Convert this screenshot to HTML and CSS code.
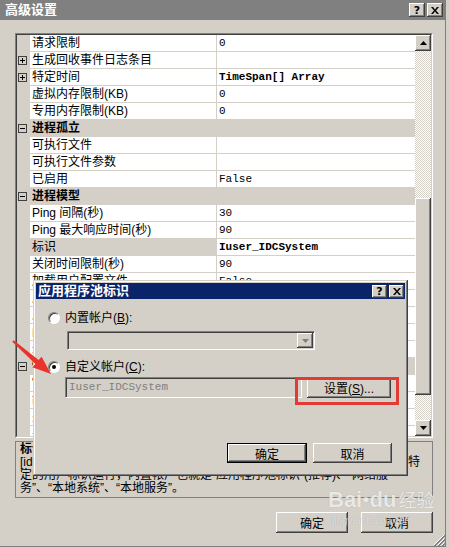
FILE: index.html
```html
<!DOCTYPE html>
<html lang="zh-CN">
<head>
    <meta charset="UTF-8">
    <title>高级设置</title>
    <link rel="stylesheet" href="styles.css">
</head>
<body>
<div class="window">
    <div class="titlebar">
        <span class="title">高级设置</span>
        <div class="caption-btns">
            <span class="cap-btn help">?</span>
            <span class="cap-btn"><svg width="8" height="7" viewBox="0 0 8 7"><path d="M0 0h2l2 2.5L6 0h2L5 3.5 8 7H6L4 4.5 2 7H0l3-3.5z"/></svg></span>
        </div>
    </div>

    <div class="content">
        <!-- 属性列表 -->
        <div class="grid">
            <div class="grid-inner">
                <div class="rows">
                    <div class="row"><span class="gutter"></span><span class="name">请求限制</span><span class="value">0</span></div>
                    <div class="row"><span class="gutter"><svg class="toggle" width="9" height="9"><rect x=".5" y=".5" width="8" height="8"/><path d="M2 4.5h5M4.5 2v5"/></svg></span><span class="name">生成回收事件日志条目</span><span class="value"></span></div>
                    <div class="row"><span class="gutter"><svg class="toggle" width="9" height="9"><rect x=".5" y=".5" width="8" height="8"/><path d="M2 4.5h5M4.5 2v5"/></svg></span><span class="name">特定时间</span><span class="value bold">TimeSpan[] Array</span></div>
                    <div class="row"><span class="gutter"></span><span class="name">虚拟内存限制(KB)</span><span class="value">0</span></div>
                    <div class="row"><span class="gutter"></span><span class="name">专用内存限制(KB)</span><span class="value">0</span></div>
                    <div class="row cat"><span class="gutter"><svg class="toggle" width="9" height="9"><rect x=".5" y=".5" width="8" height="8"/><path d="M2 4.5h5"/></svg></span><span class="name">进程孤立</span><span class="value"></span></div>
                    <div class="row"><span class="gutter"></span><span class="name">可执行文件</span><span class="value"></span></div>
                    <div class="row"><span class="gutter"></span><span class="name">可执行文件参数</span><span class="value"></span></div>
                    <div class="row"><span class="gutter"></span><span class="name">已启用</span><span class="value">False</span></div>
                    <div class="row cat"><span class="gutter"><svg class="toggle" width="9" height="9"><rect x=".5" y=".5" width="8" height="8"/><path d="M2 4.5h5"/></svg></span><span class="name">进程模型</span><span class="value"></span></div>
                    <div class="row"><span class="gutter"></span><span class="name">Ping 间隔(秒)</span><span class="value">30</span></div>
                    <div class="row"><span class="gutter"></span><span class="name">Ping 最大响应时间(秒)</span><span class="value">90</span></div>
                    <div class="row selected"><span class="gutter"></span><span class="name">标识</span><span class="value bold">Iuser_IDCSystem</span></div>
                    <div class="row"><span class="gutter"></span><span class="name">关闭时间限制(秒)</span><span class="value">90</span></div>
                    <div class="row"><span class="gutter"></span><span class="name">加载用户配置文件</span><span class="value">False</span></div>
                    <div class="row"><span class="gutter"></span><span class="name">启动时间限制(秒)</span><span class="value">90</span></div>
                    <div class="row"><span class="gutter"></span><span class="name">启用 Ping</span><span class="value">True</span></div>
                    <div class="row"><span class="gutter"></span><span class="name">闲置超时(分钟)</span><span class="value">20</span></div>
                    <div class="row"><span class="gutter"></span><span class="name">最大工作进程数</span><span class="value">1</span></div>
                    <div class="row cat"><span class="gutter"><svg class="toggle" width="9" height="9"><rect x=".5" y=".5" width="8" height="8"/><path d="M2 4.5h5"/></svg></span><span class="name">快速故障防护</span><span class="value"></span></div>
                    <div class="row"><span class="gutter"></span><span class="name">"服务不可用"响应类型</span><span class="value">HttpLevel</span></div>
                    <div class="row"><span class="gutter"></span><span class="name">故障间隔(分钟)</span><span class="value">5</span></div>
                    <div class="row"><span class="gutter"></span><span class="name">关闭可执行文件</span><span class="value"></span></div>
                    <div class="row"><span class="gutter"></span><span class="name">关闭可执行文件参数</span><span class="value"></span></div>
                </div>
                <div class="vscroll">
                    <div class="sb-btn"><svg width="7" height="4"><path d="M3.5 0L7 4H0z"/></svg></div>
                    <div class="sb-track track-top"></div>
                    <div class="sb-thumb"></div>
                    <div class="sb-track track-bottom"></div>
                    <div class="sb-btn"><svg width="7" height="4"><path d="M0 0h7L3.5 4z"/></svg></div>
                </div>
            </div>
        </div>

        <!-- 说明 -->
        <div class="desc">
            <div class="desc-title">标识</div>
            <div class="desc-line justify">[identityType] 配置应用程序池以作为内置帐户运行，或以特</div>
            <div class="desc-line">定的用户标识运行，内置帐户也就是“应用程序池标识”(推荐)、“网络服</div>
            <div class="desc-line">务”、“本地系统”、“本地服务”。</div>
        </div>

        <div class="actions">
            <button class="btn">确定</button>
            <button class="btn">取消</button>
        </div>
    </div>

    <svg class="grip" width="12" height="12" viewBox="0 0 12 12">
        <path d="M11 1L1 11M11 5L5 11M11 9L9 11" stroke="#fff"/>
        <path d="M12 1L1 12M12 2L2 12M12 5L5 12M12 6L6 12M12 9L9 12M12 10L10 12" stroke="#808080"/>
    </svg>

    <div class="watermark">
        <div class="wm-logo">Bai<span class="wm-paw">●</span>du<span class="wm-cn">经验</span></div>
        <div class="wm-url">jingyan.baidu.com</div>
    </div>

    <!-- 应用程序池标识 对话框 -->
    <div class="dialog">
        <div class="dlg-title">
            <span class="dlg-caption">应用程序池标识</span>
            <div class="caption-btns">
                <span class="cap-btn small help">?</span>
                <span class="cap-btn small"><svg width="8" height="7" viewBox="0 0 8 7"><path d="M0 0h2l2 2.5L6 0h2L5 3.5 8 7H6L4 4.5 2 7H0l3-3.5z"/></svg></span>
            </div>
        </div>
        <div class="dlg-body">
            <label class="opt"><span class="radio"></span><span>内置帐户(<u>B</u>):</span></label>
            <div class="combo">
                <span class="combo-btn"><svg width="7" height="4"><path d="M0 0h7L3.5 4z"/></svg></span>
            </div>
            <label class="opt opt-custom"><span class="radio checked"></span><span>自定义帐户(<u>C</u>):</span></label>
            <div class="edit-row">
                <div class="edit">Iuser_IDCSystem</div>
                <button class="btn set-btn">设置(<u>S</u>)...</button>
            </div>
        </div>
        <div class="dlg-actions">
            <button class="btn default">确定</button>
            <button class="btn">取消</button>
        </div>
        <div class="mark"></div>
    </div>

    <svg class="arrow" width="60" height="50" viewBox="0 0 60 50">
        <polygon points="13.7,10.2 38.6,30.1 41.6,26.7 51,44 32.4,37.3 35.4,33.9 12.3,11.8"/>
    </svg>
</div>
</body>
</html>
```

FILE: styles.css
```css
* {
    box-sizing: border-box;
}

body {
    margin: 0;
    background: #d4d0c8;
    color: #000;
    font-family: "Liberation Sans", "Noto Sans CJK SC", sans-serif;
    font-size: 12px;
    overflow: hidden;
}

.window {
    position: relative;
    width: 446px;
    height: 547px;
    border-right: 1px solid #808080;
    border-bottom: 1px solid #808080;
}

/* 标题栏 */
.titlebar {
    height: 20px;
    background: #808080;
    display: flex;
    align-items: center;
    justify-content: space-between;
    padding: 0 2px 0 5px;
}

.title {
    color: #fff;
    font-size: 13px;
    font-weight: bold;
    line-height: 20px;
}

.caption-btns {
    display: flex;
    gap: 2px;
}

.cap-btn {
    width: 16px;
    height: 14px;
    background: #d4d0c8;
    box-shadow: inset -1px -1px #404040, inset 1px 1px #fff, inset -2px -2px #808080;
    display: flex;
    align-items: center;
    justify-content: center;
    font-family: "DejaVu Sans", sans-serif;
    font-size: 11px;
    font-weight: bold;
    line-height: 1;
}

.cap-btn.small {
    width: 15px;
    height: 13px;
}

.content {
    padding: 13px 0 0 15px;
}

/* 属性网格 */
.grid {
    width: 418px;
    height: 405px;
    border: 1px solid;
    border-color: #808080 #fff #fff #808080;
}

.grid-inner {
    height: 100%;
    display: flex;
    border: 1px solid;
    border-color: #404040 #d4d0c8 #d4d0c8 #404040;
    background: #d4d0c8;
}

.rows {
    width: 398px;
    overflow: hidden;
}

.row {
    display: grid;
    grid-template-columns: 13px 187px 198px;
    height: 17px;
}

.gutter {
    background: #d4d0c8;
    display: flex;
    align-items: center;
    padding-left: 1px;
}

.toggle rect {
    fill: none;
    stroke: #404040;
}

.toggle path {
    stroke: #000;
}

.name,
.value {
    background: #fff;
    border-bottom: 1px solid #d4d0c8;
    line-height: 16px;
    padding-left: 2px;
    white-space: nowrap;
    overflow: hidden;
}

.name {
    border-right: 1px solid #d4d0c8;
}

.value {
    font-family: "Liberation Mono", "DejaVu Sans Mono", monospace;
    font-size: 11px;
}

.value.bold {
    font-weight: bold;
}

.row.cat .name,
.row.cat .value {
    background: #d4d0c8;
    font-weight: bold;
}

.row.selected .name {
    background: #d4d0c8;
}

/* 滚动条 */
.vscroll {
    width: 16px;
    display: flex;
    flex-direction: column;
}

.sb-btn,
.sb-thumb {
    background: #d4d0c8;
    box-shadow: inset -1px -1px #404040, inset 1px 1px #fff, inset -2px -2px #808080;
}

.sb-btn {
    height: 16px;
    display: flex;
    align-items: center;
    justify-content: center;
}

.sb-track {
    background: repeating-conic-gradient(#fff 0 25%, #d4d0c8 0 50%) 0 0 / 2px 2px;
}

.track-top {
    height: 147px;
}

.sb-thumb {
    height: 197px;
}

.track-bottom {
    flex: 1;
}

/* 说明区域 */
.desc {
    width: 418px;
    height: 57px;
    margin-top: 3px;
    border: 1px solid #808080;
    padding: 1px 12px 0 4px;
    line-height: 13px;
    overflow: hidden;
}

.desc-title {
    font-weight: bold;
}

.desc-line {
    white-space: nowrap;
}

.desc-line.justify {
    text-align: justify;
    text-align-last: justify;
}

.actions {
    width: 418px;
    display: flex;
    justify-content: flex-end;
    gap: 13px;
    margin-top: 14px;
}

.btn {
    width: 72px;
    height: 21px;
    padding: 0;
    border: none;
    background: #d4d0c8;
    box-shadow: inset -1px -1px #404040, inset 1px 1px #fff, inset -2px -2px #808080;
    font-family: "Liberation Sans", "Noto Sans CJK SC", sans-serif;
    font-size: 12px;
    color: #000;
}

.grip {
    position: absolute;
    left: 433px;
    top: 534px;
}

.watermark {
    position: absolute;
    left: 328px;
    top: 484px;
    color: rgba(255, 255, 255, 0.75);
    text-shadow: 0 0 1px rgba(120, 120, 120, 0.5);
    pointer-events: none;
}

.wm-logo {
    font-family: "Liberation Sans", sans-serif;
    font-size: 22px;
    font-weight: bold;
    line-height: 30px;
}

.wm-paw {
    font-size: 12px;
    vertical-align: top;
}

.wm-cn {
    font-family: "Noto Sans CJK SC", sans-serif;
    font-size: 18px;
    font-weight: normal;
    margin-left: 2px;
}

.wm-url {
    font-family: "Liberation Sans", sans-serif;
    font-size: 10px;
    line-height: 12px;
    margin-left: 4px;
    color: rgba(255, 255, 255, 0.6);
}

/* 对话框 */
.dialog {
    position: absolute;
    left: 33px;
    top: 280px;
    width: 375px;
    height: 196px;
    padding: 3px;
    background: #d4d0c8;
    box-shadow: inset -1px -1px #404040, inset 1px 1px #d4d0c8, inset -2px -2px #808080, inset 2px 2px #fff;
    display: flex;
    flex-direction: column;
}

.dlg-title {
    height: 16px;
    background: #0a246a;
    display: flex;
    align-items: center;
    justify-content: space-between;
    padding: 0 1px 0 2px;
}

.dlg-caption {
    color: #fff;
    font-size: 13px;
    font-weight: bold;
    line-height: 16px;
}

.dlg-body {
    display: flex;
    flex-direction: column;
    align-items: flex-start;
    padding: 11px 0 0 12px;
}

.opt {
    display: flex;
    align-items: center;
    gap: 5px;
    height: 16px;
    line-height: 16px;
}

.opt-custom {
    margin-top: 9px;
}

.radio {
    width: 12px;
    height: 12px;
    border-radius: 50%;
    border: 1px solid;
    border-color: #808080 #fff #fff #808080;
    background: #fff;
    box-shadow: inset 1px 1px #404040;
    display: flex;
    align-items: center;
    justify-content: center;
}

.radio.checked::after {
    content: "";
    width: 4px;
    height: 4px;
    border-radius: 50%;
    background: #000;
}

.combo {
    width: 248px;
    height: 19px;
    margin: 5px 0 0 19px;
    border: 1px solid;
    border-color: #808080 #fff #fff #808080;
    box-shadow: inset 1px 1px #404040;
    display: flex;
    justify-content: flex-end;
    padding: 1px;
}

.combo-btn {
    width: 16px;
    height: 15px;
    background: #d4d0c8;
    box-shadow: inset -1px -1px #404040, inset 1px 1px #fff, inset -2px -2px #808080;
    display: flex;
    align-items: center;
    justify-content: center;
}

.combo-btn path {
    fill: #808080;
}

.edit-row {
    display: flex;
    gap: 5px;
    margin: 2px 0 0 17px;
}

.edit {
    width: 237px;
    height: 21px;
    border: 1px solid;
    border-color: #808080 #fff #fff #808080;
    box-shadow: inset 1px 1px #404040;
    padding: 0 0 0 3px;
    font-family: "Liberation Mono", "DejaVu Sans Mono", monospace;
    font-size: 11px;
    line-height: 19px;
    color: #808080;
}

.set-btn {
    width: 84px;
}

.dlg-actions {
    margin-top: auto;
    display: flex;
    justify-content: flex-end;
    gap: 6px;
    padding: 0 13px 10px 0;
}

.dlg-actions .btn {
    width: 79px;
    height: 20px;
}

.btn.default {
    width: 80px;
    box-shadow: inset 0 0 0 1px #000, inset -2px -2px #404040, inset 2px 2px #fff, inset -3px -3px #808080;
}

/* 红框标注 */
.mark {
    position: absolute;
    left: 262px;
    top: 97px;
    width: 104px;
    height: 28px;
    border: 3px solid #e23a34;
}

.arrow {
    position: absolute;
    left: 0;
    top: 330px;
}

.arrow polygon {
    fill: #e8342c;
}
```
